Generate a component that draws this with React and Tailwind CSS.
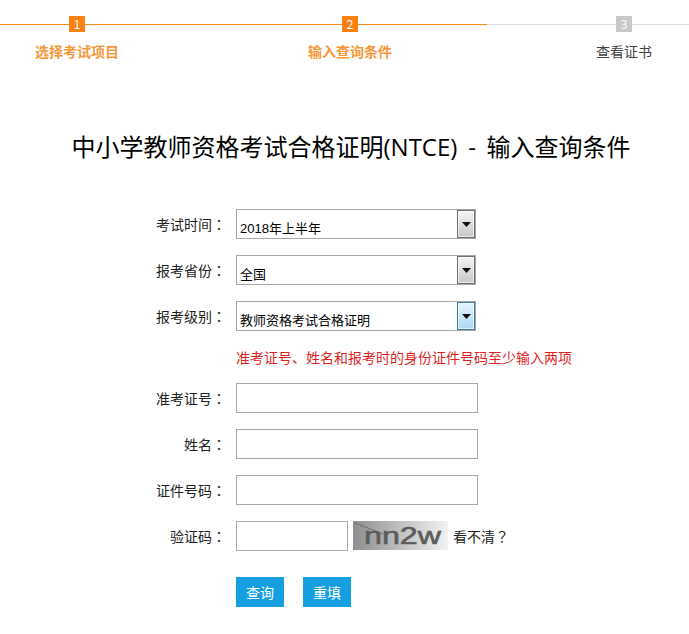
function Square({ n, gray }) {
  return (
    <div className={`w-4 h-4 flex items-center justify-center text-[12px] leading-none text-white shrink-0 ${gray ? "bg-[#c8c8c8]" : "bg-[#fb8210]"}`}>
      {n}
    </div>
  );
}

function Arrow({ active }) {
  return (
    <div className={`w-[18px] h-[28px] border flex items-center justify-center shrink-0 shadow-[inset_0_0_0_1px_#ffffff99] ${active ? "border-[#3c7fb1] bg-gradient-to-b from-[#e8f5fc] to-[#a9d9f3]" : "border-[#707070] bg-gradient-to-b from-[#f4f4f4] to-[#c8c8c8]"}`}>
      <svg width="9" height="5" viewBox="0 0 9 5"><path d="M0 0h9L4.5 5z" fill="#111" /></svg>
    </div>
  );
}

function Colon() {
  return <span className="font-['Noto_Sans_CJK_TC',sans-serif]">：</span>;
}

function Label({ children }) {
  return <div className="w-[236px] pr-[10px] text-right text-[14px] leading-[30px] text-[#222]">{children}<Colon /></div>;
}

function SelectRow({ label, value, active }) {
  return (
    <div className="flex mb-4">
      <Label>{label}</Label>
      <div className="w-[240px] h-[30px] border border-[#a6a6a6] flex justify-between bg-white">
        <div className="pl-[3px] pt-[9px] text-[13px] leading-[20px] text-black font-['Liberation_Sans','Noto_Sans_CJK_SC',sans-serif]">{value}</div>
        <Arrow active={active} />
      </div>
    </div>
  );
}

function InputRow({ label }) {
  return (
    <div className="flex mb-4">
      <Label>{label}</Label>
      <div className="w-[242px] h-[30px] border border-[#a9a9a9] bg-white" />
    </div>
  );
}

export default function App() {
  return (
    <div className="w-[689px] h-[634px] bg-white overflow-hidden font-['Noto_Sans_CJK_SC','Liberation_Sans',sans-serif]">
      <div className="pt-4 flex items-center">
        <div className="w-[69px] h-px bg-[#f58a1f]" />
        <Square n="1" />
        <div className="w-[257px] h-px bg-[#f58a1f]" />
        <Square n="2" />
        <div className="w-[129px] h-px bg-[#f58a1f]" />
        <div className="w-[129px] h-px bg-[#dddddd]" />
        <Square n="3" gray />
        <div className="flex-1 h-px bg-[#dddddd]" />
      </div>
      <div className="flex pl-[35px] mt-[9px] text-[14px] leading-[20px] font-bold">
        <span className="text-[#f7983a] w-[84px]">选择考试项目</span>
        <span className="text-[#f7983a] w-[84px] ml-[189px]">输入查询条件</span>
        <span className="text-[#444] w-[56px] ml-[204px] font-normal">查看证书</span>
      </div>
      <h1 className="mt-[68px] pl-[71.5px] text-[24px] leading-[36px] text-black whitespace-nowrap [word-spacing:4.5px] font-['Open_Sans','Noto_Sans_CJK_SC',sans-serif]">
        中小学教师资格考试合格证明(NTCE) - 输入查询条件
      </h1>
      <div className="mt-[44px]">
        <SelectRow label="考试时间" value="2018年上半年" />
        <SelectRow label="报考省份" value="全国" />
        <SelectRow label="报考级别" value="教师资格考试合格证明" active />
        <div className="pl-[236px] text-[14px] leading-[20px] text-[#e01f1f] mb-[16px]">
          准考证号、姓名和报考时的身份证件号码至少输入两项
        </div>
        <InputRow label="准考证号" />
        <InputRow label="姓名" />
        <InputRow label="证件号码" />
        <div className="flex items-start">
          <Label>验证码</Label>
          <div className="w-[112px] h-[30px] border border-[#a9a9a9] bg-white" />
          <svg className="ml-[5px]" width="95" height="29" viewBox="0 0 95 29">
            <defs>
              <linearGradient id="cg" x1="0" x2="1" y1="0" y2="0">
                <stop offset="0" stopColor="#8e8e8e" />
                <stop offset="1" stopColor="#f2f2f2" />
              </linearGradient>
            </defs>
            <rect width="95" height="29" fill="url(#cg)" />
            <path d="M2 2 L30 13" stroke="#6e6e6e" strokeWidth="1" fill="none" />
            <text x="11" y="23" fontFamily="Liberation Sans" fontSize="24" fill="#5c5c5c" stroke="#5c5c5c" strokeWidth="0.6" textLength="77" lengthAdjust="spacingAndGlyphs">nn2w</text>
          </svg>
          <div className="ml-[5px] text-[14px] leading-[30px] text-[#222]">看不清<span className="font-['Noto_Sans_CJK_TC',sans-serif]">？</span></div>
        </div>
        <div className="flex pl-[236px] mt-[26px] gap-[19px]">
          <div className="w-[48px] h-[30px] bg-[#169fe0] text-white text-[14px] leading-[30px] text-center">查询</div>
          <div className="w-[48px] h-[30px] bg-[#169fe0] text-white text-[14px] leading-[30px] text-center">重填</div>
        </div>
      </div>
    </div>
  );
}
